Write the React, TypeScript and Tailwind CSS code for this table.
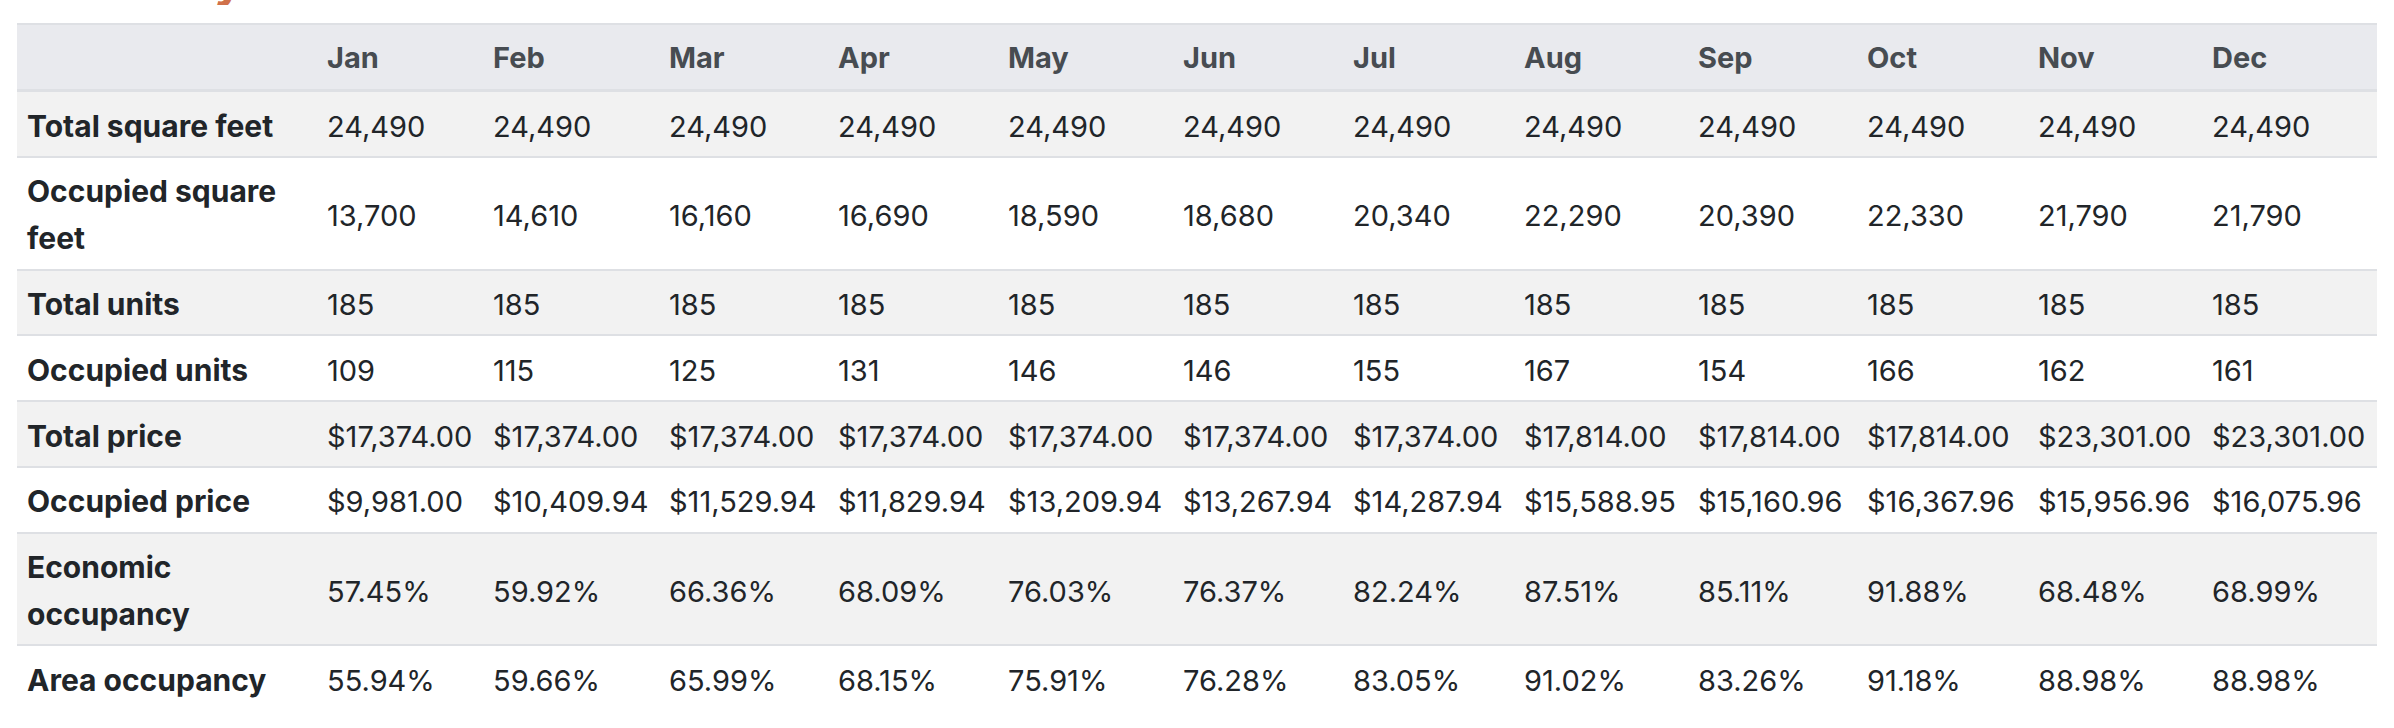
import React from "react";

const months = ["Jan", "Feb", "Mar", "Apr", "May", "Jun", "Jul", "Aug", "Sep", "Oct", "Nov", "Dec"];

const rows: { label: string; values: string[] }[] = [
  { label: "Total square feet", values: Array(12).fill("24,490") },
  {
    label: "Occupied square feet",
    values: ["13,700", "14,610", "16,160", "16,690", "18,590", "18,680", "20,340", "22,290", "20,390", "22,330", "21,790", "21,790"],
  },
  { label: "Total units", values: Array(12).fill("185") },
  { label: "Occupied units", values: ["109", "115", "125", "131", "146", "146", "155", "167", "154", "166", "162", "161"] },
  {
    label: "Total price",
    values: [
      "$17,374.00", "$17,374.00", "$17,374.00", "$17,374.00", "$17,374.00", "$17,374.00", "$17,374.00",
      "$17,814.00", "$17,814.00", "$17,814.00", "$23,301.00", "$23,301.00",
    ],
  },
  {
    label: "Occupied price",
    values: [
      "$9,981.00", "$10,409.94", "$11,529.94", "$11,829.94", "$13,209.94", "$13,267.94", "$14,287.94",
      "$15,588.95", "$15,160.96", "$16,367.96", "$15,956.96", "$16,075.96",
    ],
  },
  {
    label: "Economic occupancy",
    values: ["57.45%", "59.92%", "66.36%", "68.09%", "76.03%", "76.37%", "82.24%", "87.51%", "85.11%", "91.88%", "68.48%", "68.99%"],
  },
  {
    label: "Area occupancy",
    values: ["55.94%", "59.66%", "65.99%", "68.15%", "75.91%", "76.28%", "83.05%", "91.02%", "83.26%", "91.18%", "88.98%", "88.98%"],
  },
];

export default function App() {
  return (
    <div className="bg-white w-[2394px] h-[728px] overflow-hidden font-['Inter',sans-serif] text-[#212529]">
      <div className="h-[5px] overflow-hidden pl-[17px]">
        <h2 className="text-[48px] leading-[48px] -mt-[44px] font-bold text-[#d0714a]">Summary</h2>
      </div>
      <table className="table-fixed w-[2360px] ml-[17px] mt-[18px] border-separate border-spacing-0 text-[29px]">
        <colgroup>
          <col className="w-[300px]" />
          <col className="w-[166px]" />
          <col className="w-[176px]" />
          <col className="w-[169px]" />
          <col className="w-[170px]" />
          <col className="w-[175px]" />
          <col className="w-[170px]" />
          <col className="w-[171px]" />
          <col className="w-[174px]" />
          <col className="w-[169px]" />
          <col className="w-[171px]" />
          <col className="w-[174px]" />
          <col className="w-[175px]" />
        </colgroup>
        <thead>
          <tr className="bg-[#e9eaee]">
            <th className="pt-[9px] pb-[8px] pl-[10px] leading-[47px] border-t-[2px] border-b-[3px] border-[#dee0e4]"></th>
            {months.map((m) => (
              <th
                key={m}
                className="pt-[9px] pb-[8px] pl-[10px] leading-[47px] text-left font-bold text-[#474c51] border-t-[2px] border-b-[3px] border-[#dee0e4]"
              >
                {m}
              </th>
            ))}
          </tr>
        </thead>
        <tbody>
          {rows.map((r, i) => {
            const last = i === rows.length - 1;
            const cell =
              "pt-[10.5px] pb-[6.25px] pl-[10px] leading-[47px] align-middle " +
              (last ? "" : "border-b-[2px] border-[#dee0e4]");
            return (
              <tr key={r.label} className={i % 2 === 0 ? "bg-[#f2f2f2]" : "bg-white"}>
                <th className={cell + " pr-[8px] text-left font-bold text-[30px]"}>{r.label}</th>
                {r.values.map((v, j) => (
                  <td key={j} className={cell + " whitespace-nowrap"}>
                    {v}
                  </td>
                ))}
              </tr>
            );
          })}
        </tbody>
      </table>
    </div>
  );
}
